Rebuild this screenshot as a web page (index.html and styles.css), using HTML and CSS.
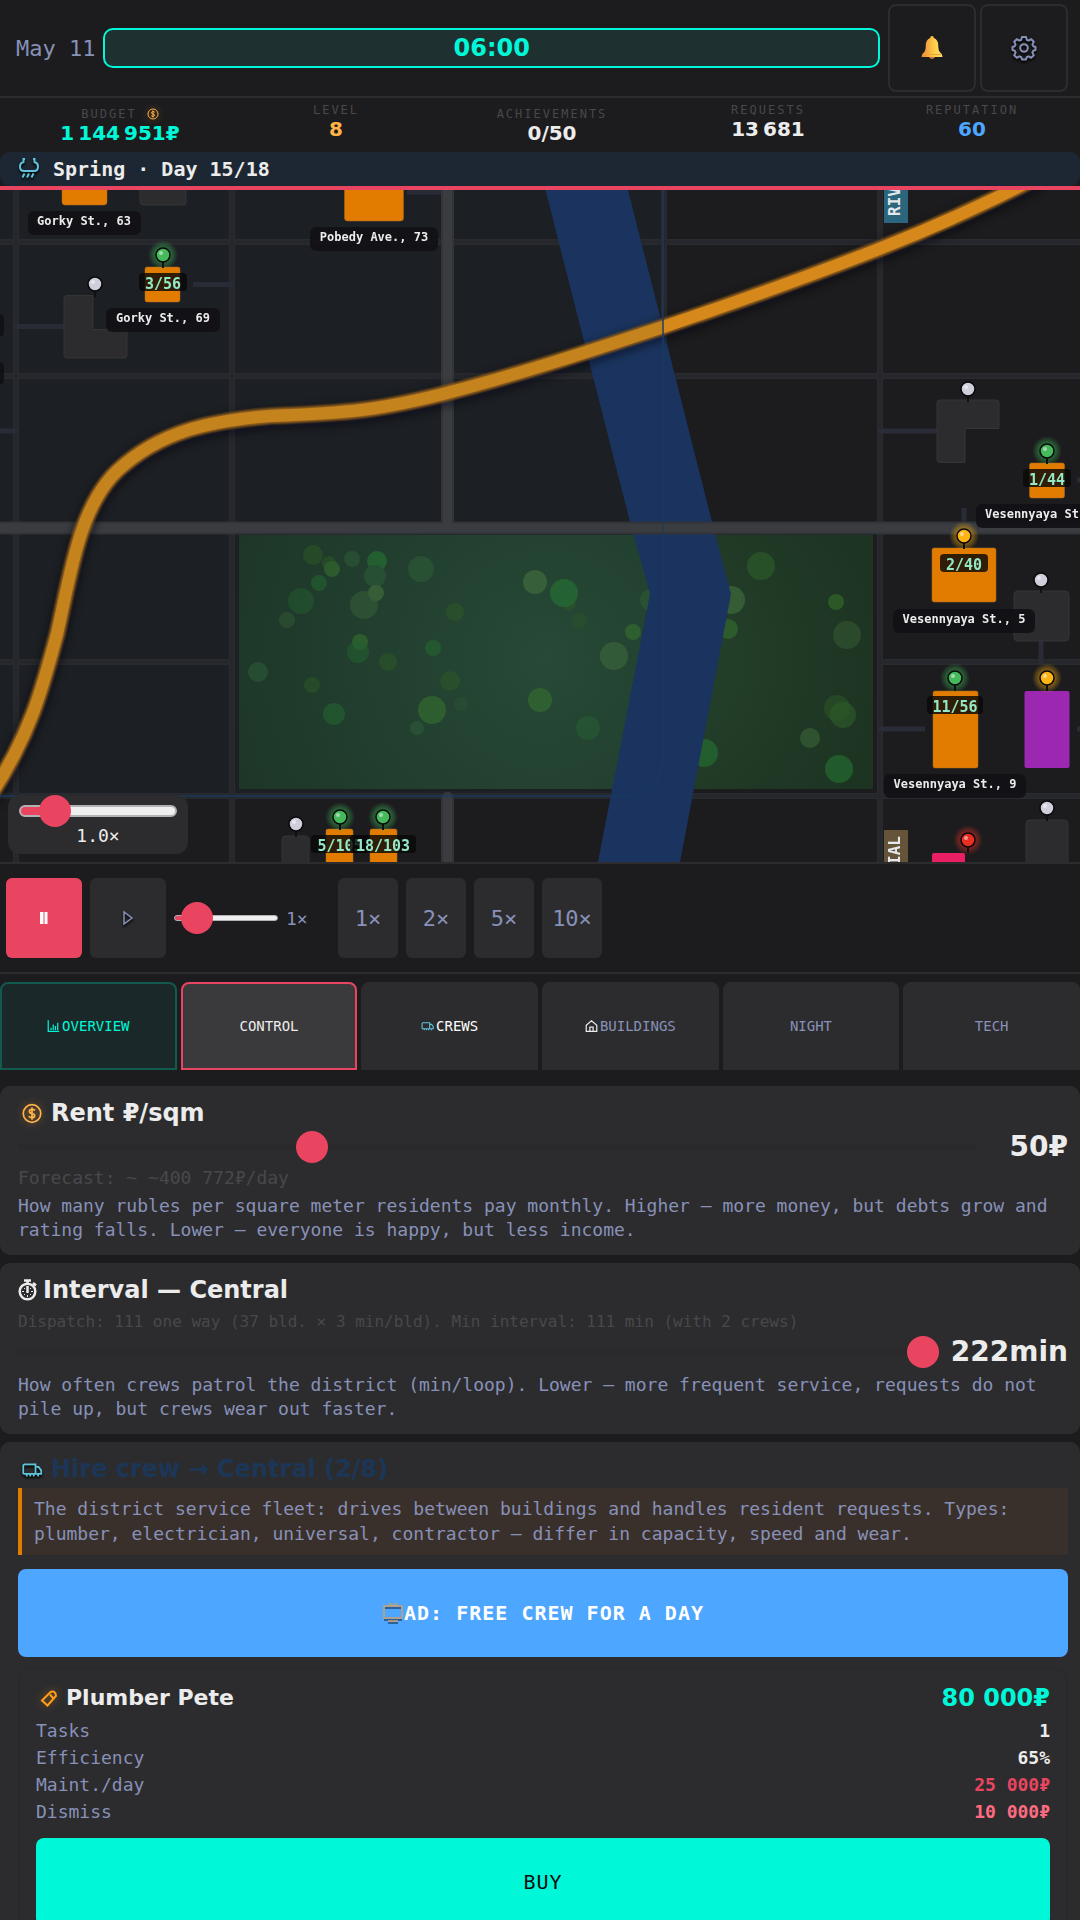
FILE: index.html
```html
<!DOCTYPE html>
<html lang="en">
<head>
<meta charset="utf-8">
<meta name="viewport" content="width=device-width, initial-scale=1">
<title>District manager</title>
<link rel="stylesheet" href="styles.css">
</head>
<body>
<svg class="defs" aria-hidden="true">
  <symbol id="i-coin" viewBox="0 0 24 24"><g fill="none" stroke="currentColor" stroke-width="2"><circle cx="12" cy="12" r="10"/><path d="M15.500 8.500Q14 7 12 7.200Q8.800 7.500 9 9.600Q9.200 11.600 12 12Q15 12.500 15 14.500Q15 16.700 12 16.800Q9.500 16.800 8.300 15.200M12 5v14"/></g></symbol>
  <symbol id="i-truck" viewBox="0 0 24 24"><g fill="none" stroke="currentColor" stroke-width="2"><path d="M2 17V8Q2 6 4 6H16v11M16 9h3.500l3 4v4H2M6 17.500v2.500M10 17.500v2.500M14 17.500v2.500M19 17.500v2.500"/></g></symbol>
  <symbol id="i-chart" viewBox="0 0 16 16"><path d="M1.500 1v13.500H15M5 13v-3M7.700 13V6M10.400 13V8M13.200 13V4" fill="none" stroke="currentColor" stroke-width="1.500"/></symbol>
  <symbol id="i-home" viewBox="0 0 16 16"><path d="M1.500 14.500V7L8 1.500 14.500 7v7.500zM6 14v-4.500h4V14" fill="none" stroke="currentColor" stroke-width="1.500"/></symbol>
</svg>

<div class="app">
  <header class="topbar">
    <span class="date">May 11</span>
    <div class="clock">06:00</div>
    <div class="topbar-actions">
      <button class="icon-btn" type="button" aria-label="Notifications">
        <svg width="24" height="24" viewBox="0 0 24 24"><defs><linearGradient id="bell" x1="0" x2="1"><stop offset="0" stop-color="#e8833a"/><stop offset=".6" stop-color="#ffce47"/><stop offset="1" stop-color="#ffe06a"/></linearGradient></defs><path d="M12 0q1.800 0 1.800 2Q18 3.500 18.200 9q.2 6 1.800 7.300 2.500 1.400 2.500 4.700H1.500q0-3.300 2.500-4.700Q5.600 15 5.800 9 6 3.500 10.200 2q0-2 1.800-2z" fill="url(#bell)"/><path d="M3 18.500h18" stroke="#f2a23a" stroke-width="1"/><path d="M9 21h6q-1 2-3 2t-3-2z" fill="#c9703a"/></svg>
      </button>
      <button class="icon-btn" type="button" aria-label="Settings">
        <svg class="shadowed" width="26" height="26" viewBox="0 0 26 26" fill="none" stroke="#8891b8" stroke-width="2" stroke-linejoin="round"><path d="M11 2h4l.8 2.800 1.800.8L20.200 4.200l2.600 2.600-1.400 2.600.8 1.800 2.300.8v3l-2.300.8-.8 1.800 1.400 2.600-2.600 2.600-2.600-1.400-1.800.8L15 24.500h-4l-.8-2.300-1.800-.8-2.600 1.400-2.600-2.600 1.400-2.600-.8-1.800-2.300-.8v-3l2.300-.8.8-1.800-1.400-2.600 2.600-2.600 2.600 1.400 1.800-.8z"/><circle cx="13" cy="13" r="3.800"/></svg>
      </button>
    </div>
  </header>

  <section class="stats" aria-label="City statistics">
    <div class="stat stat-low"><span class="stat-label">BUDGET <svg class="glow stat-icon"><use href="#i-coin"/></svg></span><span class="stat-value c-mint">1&#8239;144&#8239;951₽</span></div>
    <div class="stat"><span class="stat-label">LEVEL</span><span class="stat-value c-amber">8</span></div>
    <div class="stat stat-low"><span class="stat-label">ACHIEVEMENTS</span><span class="stat-value">0/50</span></div>
    <div class="stat"><span class="stat-label">REQUESTS</span><span class="stat-value">13&#8239;681</span></div>
    <div class="stat"><span class="stat-label">REPUTATION</span><span class="stat-value c-blue">60</span></div>
  </section>

  <div class="season">
    <svg class="shadowed" width="22" height="22" viewBox="0 0 22 22" fill="none" stroke="#5fc4dc" stroke-width="2"><path d="M7 1H5.500V4Q2 5 2 8.500 2 13 6 13h10q4 0 4-4.500 0-3.500-3.500-4.500V1H15M6.500 15.500l-2 4M11 15.500l-2 4M15.500 15.500l-2 4"/></svg>
    <span>Spring · Day 15/18</span>
  </div>

  <section class="map" aria-label="City map">
    <svg class="map-canvas" viewBox="0 190 1080 672">
      <defs>
        <radialGradient id="park" gradientUnits="userSpaceOnUse" cx="545" cy="660" r="330"><stop offset="0" stop-color="#274936"/><stop offset="1" stop-color="#1d3628"/></radialGradient>
        <radialGradient id="parkEast" gradientUnits="userSpaceOnUse" cx="640" cy="660" r="240"><stop offset="0" stop-color="#25432d"/><stop offset="1" stop-color="#1d3422"/></radialGradient>
        <radialGradient id="glowGreen"><stop offset=".35" stop-color="#3fbf5a" stop-opacity=".6"/><stop offset="1" stop-color="#3fbf5a" stop-opacity="0"/></radialGradient>
        <radialGradient id="glowYellow"><stop offset=".35" stop-color="#ffb30f" stop-opacity=".6"/><stop offset="1" stop-color="#ffb30f" stop-opacity="0"/></radialGradient>
        <radialGradient id="glowRed"><stop offset=".35" stop-color="#ef3124" stop-opacity=".6"/><stop offset="1" stop-color="#ef3124" stop-opacity="0"/></radialGradient>
        <linearGradient id="highway" gradientUnits="userSpaceOnUse" x1="663" x2="664" y1="0" y2="0"><stop offset="0" stop-color="#c5831e"/><stop offset="1" stop-color="#d6891a"/></linearGradient>
        <filter id="soft" x="-5%" y="-5%" width="110%" height="110%"><feGaussianBlur stdDeviation="4"/></filter>
        <filter id="edge" x="-5%" y="-5%" width="110%" height="110%"><feGaussianBlur stdDeviation="1"/></filter>
        <g id="pin"><path d="M0 7v6" stroke="#111" stroke-width="2"/><circle r="7" stroke="#08080a" stroke-width="1.500"/><circle cx="-2" cy="-2" r="2" fill="#fff" opacity=".5"/></g>
      </defs>
      <rect y="190" width="1080" height="672" fill="#1c1c1e"/>
      <path d="M0 190H663V756Q663 796 623 796H0z" fill="#1c1f24"/>

      <g class="road-edge"><path d="M16 190V862M232 190V862M664 190V521M880 190V862M0 242H1080M0 376H1080M0 662H231M880 662H1080M0 796H1080"/></g>
      <g class="road-core"><path d="M16 190V862M232 190V862M664 190V521M880 190V862M0 242H1080M0 376H1080M0 662H231M880 662H1080M0 796H1080"/></g>

      <path d="M239 535H664V789H239z" fill="url(#park)"/>
      <path d="M664 535H873V789H664z" fill="url(#parkEast)"/>
      <g opacity=".5">
        <g fill="#2f5a26"><circle cx="313" cy="555" r="10"/><circle cx="329" cy="563" r="7"/><circle cx="455" cy="612" r="9"/><circle cx="388" cy="662" r="9"/><circle cx="312" cy="685" r="8"/><circle cx="450" cy="681" r="10"/><circle cx="579" cy="621" r="8" opacity=".6"/><circle cx="569" cy="603" r="7"/><circle cx="837" cy="708" r="13"/></g>
        <g fill="#3a7a2e"><circle cx="332" cy="569" r="8"/><circle cx="360" cy="642" r="8"/><circle cx="432" cy="710" r="14"/><circle cx="540" cy="700" r="12"/><circle cx="633" cy="632" r="8"/><circle cx="728" cy="629" r="10"/><circle cx="761" cy="566" r="14" opacity=".7"/><circle cx="836" cy="602" r="8"/><circle cx="843" cy="715" r="13" opacity=".7"/></g>
        <g fill="#278034"><circle cx="377" cy="561" r="10"/><circle cx="319" cy="583" r="8" opacity=".7"/><circle cx="301" cy="601" r="13" opacity=".5"/><circle cx="358" cy="652" r="11" opacity=".6"/><circle cx="334" cy="714" r="11" opacity=".7"/><circle cx="433" cy="648" r="8" opacity=".7"/><circle cx="564" cy="593" r="14"/><circle cx="588" cy="728" r="12" opacity=".5"/><circle cx="704" cy="753" r="14"/><circle cx="839" cy="769" r="14"/></g>
        <g fill="#2f6138"><circle cx="352" cy="559" r="8"/><circle cx="375" cy="576" r="11"/><circle cx="421" cy="569" r="13"/><circle cx="258" cy="672" r="10"/><circle cx="461" cy="704" r="7" opacity=".5"/><circle cx="417" cy="728" r="7"/><circle cx="651" cy="600" r="11"/></g>
        <g fill="#4a7c42"><circle cx="364" cy="605" r="14" opacity=".6"/><circle cx="376" cy="593" r="8"/><circle cx="287" cy="620" r="8" opacity=".5"/><circle cx="535" cy="582" r="12"/><circle cx="614" cy="656" r="14" opacity=".8"/><circle cx="731" cy="600" r="14"/><circle cx="847" cy="635" r="14" opacity=".6"/><circle cx="810" cy="738" r="10" opacity=".8"/></g>
      </g>
      <path d="M545.500 190H628L712 522 731 594 680 862H598L650 594 630 522z" fill="#1a345f"/>

      <g fill="none" stroke="#313439" stroke-width="13"><path d="M447.500 190V528M0 528H1080"/><path d="M447.500 798V862" stroke-linecap="round"/></g>
      <g fill="none" stroke="#3a3c40" stroke-width="9"><path d="M447.500 190V528M0 528H1080"/><path d="M447.500 798V862" stroke-linecap="round"/></g>

      <path class="highway" d="M-10 796C30 735 42 690 57 634 71 572 79 508 117 471 160 431 210 421 270 416 350 413 380 410 447 393 520 374 590 351 663 327 740 301 810 276 879 249 940 225 990 202 1040 176" transform="translate(0 3)" stroke="#0b0c10" stroke-opacity=".5" stroke-width="20" filter="url(#soft)"/>
      <path class="highway" d="M-10 796C30 735 42 690 57 634 71 572 79 508 117 471 160 431 210 421 270 416 350 413 380 410 447 393 520 374 590 351 663 327 740 301 810 276 879 249 940 225 990 202 1040 176" stroke="#94611a" stroke-width="16" filter="url(#edge)"/>
      <path class="highway" d="M-10 796C30 735 42 690 57 634 71 572 79 508 117 471 160 431 210 421 270 416 350 413 380 410 447 393 520 374 590 351 663 327 740 301 810 276 879 249 940 225 990 202 1040 176" stroke="url(#highway)" stroke-width="12"/>
      <path d="M663 190V756Q663 796 623 796H0" fill="none" stroke="#1b3a5e" stroke-opacity=".7" stroke-width="2"/>

      <path d="M407 192H441M193 284.500H233M15 326.500H64M0 431H17M878 431H937M964 508V521M1041 641V664M878 729H925M1077 480H1080M1077 729H1080" stroke="#292c36" stroke-width="5" fill="none"/>

      <g fill="#2c2c2e" stroke="#353537">
        <rect x="140" y="170" width="46" height="35" rx="3"/>
        <path d="M67 295.500H93V329.500H127V355Q127 358 124 358H67Q64 358 64 355V298Q64 295.500 67 295.500z"/>
        <path d="M940 400H996Q999 400 999 403V428.500H965V462.500H940Q937 462.500 937 460V403Q937 400 940 400z"/>
        <rect x="1014" y="591" width="55" height="50" rx="4"/><rect x="1026" y="820" width="42" height="50" rx="4"/><rect x="282" y="836" width="27" height="40" rx="4"/>
      </g>
      <g fill="#e17c00" stroke="#a86a20" stroke-width=".5">
        <rect x="62" y="170" width="45" height="35" rx="3"/><rect x="344.500" y="170" width="59" height="51" rx="3"/><rect x="145" y="267" width="35" height="35" rx="2"/><rect x="1029.500" y="463" width="35" height="35" rx="2"/><rect x="932" y="548" width="64" height="54" rx="2"/><rect x="933" y="691" width="45" height="77" rx="2"/><rect x="326" y="829" width="27" height="40" rx="2"/><rect x="370" y="829" width="27" height="40" rx="2"/>
      </g>
      <rect x="1024.500" y="691" width="45" height="77" rx="2" fill="#9c27b0"/><rect x="932" y="853" width="33" height="20" rx="2" fill="#e91e63"/>

      <g class="map-tag"><rect x="884" y="180" width="24" height="43" fill="#2b667c"/><text transform="translate(900 216) rotate(-90)">RIV</text><rect x="884" y="830" width="24" height="40" fill="#66543a"/><text transform="translate(900 836) rotate(-90)" text-anchor="end">IAL</text></g>

      <g fill="url(#glowGreen)"><circle cx="163" cy="255" r="15"/><circle cx="1047" cy="451" r="15"/><circle cx="955" cy="678" r="15"/><circle cx="340" cy="817" r="15"/><circle cx="383" cy="817" r="15"/></g>
      <g fill="url(#glowYellow)"><circle cx="964" cy="536" r="15"/><circle cx="1047" cy="678" r="15"/></g>
      <circle cx="968" cy="840" r="15" fill="url(#glowRed)"/>
      <g fill="#45b95c"><use href="#pin" x="163" y="255"/><use href="#pin" x="1047" y="451"/><use href="#pin" x="955" y="678"/><use href="#pin" x="340" y="817"/><use href="#pin" x="383" y="817"/></g>
      <g fill="#fdb414"><use href="#pin" x="964" y="536"/><use href="#pin" x="1047" y="678"/></g>
      <g fill="#e82e22"><use href="#pin" x="968" y="840"/></g>
      <g fill="#cfcfdb"><use href="#pin" x="95" y="284"/><use href="#pin" x="968" y="389"/><use href="#pin" x="1041" y="580"/><use href="#pin" x="1047" y="808"/><use href="#pin" x="296" y="824"/></g>

      <g class="map-label">
        <rect x="28" y="211" width="113" height="24" rx="6"/><text x="84" y="225">Gorky St., 63</text>
        <rect x="310" y="227" width="128" height="24" rx="6"/><text x="374" y="241">Pobedy Ave., 73</text>
        <rect x="106" y="308" width="114" height="24" rx="6"/><text x="163" y="322">Gorky St., 69</text>
        <rect x="976" y="504" width="142" height="24" rx="6"/><text class="start" x="985" y="518">Vesennyaya St.</text>
        <rect x="893" y="609" width="142" height="24" rx="6"/><text x="964" y="623">Vesennyaya St., 5</text>
        <rect x="884" y="774" width="142" height="24" rx="6"/><text x="955" y="788">Vesennyaya St., 9</text>
        <rect x="-20" y="314" width="24" height="23" rx="5"/><rect x="-20" y="362" width="24" height="23" rx="5"/>
      </g>
      <g class="map-count">
        <rect x="139" y="273" width="48" height="18" rx="4"/><text x="163" y="289">3/56</text>
        <rect x="1023" y="469" width="48" height="18" rx="4"/><text x="1047" y="485">1/44</text>
        <rect x="940" y="554" width="48" height="18" rx="4"/><text x="964" y="570">2/40</text>
        <rect x="927" y="696" width="56" height="18" rx="4"/><text x="955" y="712">11/56</text>
        <rect x="311" y="835" width="57" height="18" rx="4"/><text x="340" y="851">5/105</text>
        <rect x="350" y="835" width="66" height="18" rx="4"/><text x="383" y="851">18/103</text>
      </g>
    </svg>
    <div class="zoom-panel">
      <input class="range range-thick" type="range" id="zoom" min="0" max="100" value="15" style="--fill:22%" aria-label="Map zoom">
      <output for="zoom">1.0×</output>
    </div>
  </section>

  <section class="controls" aria-label="Time controls">
    <button class="play-btn is-on" type="button" aria-label="Pause"><svg width="10" height="12" viewBox="0 0 10 12"><path d="M1 0h3.500v12H1zM5.500 0h3v12h-3z" fill="#fff"/></svg></button>
    <button class="play-btn" type="button" aria-label="Play"><svg class="shadowed" width="14" height="18" viewBox="0 0 14 18"><path d="M3 3v12l8-6z" fill="none" stroke="#8891b8" stroke-width="1.500"/></svg></button>
    <input class="range speed-range" type="range" id="speed" min="0" max="100" value="8" style="--fill:20%" aria-label="Speed">
    <output class="speed-value" for="speed">1×</output>
    <div class="speed-group">
      <button class="speed-btn" type="button">1×</button>
      <button class="speed-btn" type="button">2×</button>
      <button class="speed-btn" type="button">5×</button>
      <button class="speed-btn" type="button">10×</button>
    </div>
  </section>

  <nav class="tabs">
    <button class="tab tab-overview" type="button"><svg class="tab-icon"><use href="#i-chart"/></svg>OVERVIEW</button>
    <button class="tab tab-active" type="button">CONTROL</button>
    <button class="tab tab-bright" type="button"><svg class="tab-icon c-sky"><use href="#i-truck"/></svg>CREWS</button>
    <button class="tab" type="button"><svg class="tab-icon c-white"><use href="#i-home"/></svg>BUILDINGS</button>
    <button class="tab" type="button">NIGHT</button>
    <button class="tab" type="button">TECH</button>
  </nav>

  <main class="panel">
    <section class="card">
      <h2 class="card-title"><svg class="title-icon glow"><use href="#i-coin"/></svg><label for="rent">Rent ₽/sqm</label></h2>
      <div class="slider-row">
        <input class="range range-dim" type="range" id="rent" min="20" max="120" value="50">
        <output class="slider-value" for="rent">50₽</output>
      </div>
      <p class="forecast">Forecast: ~ ~400 772₽/day</p>
      <p class="description">How many rubles per square meter residents pay monthly. Higher — more money, but debts grow and rating falls. Lower — everyone is happy, but less income.</p>
    </section>

    <section class="card">
      <h2 class="card-title title-spaced"><svg width="20" height="22" viewBox="0 0 20 22" fill="none" stroke="#ececec"><circle cx="9.500" cy="12.500" r="7.800" stroke-width="2.500"/><path d="M6 1.500h7M9.500 1v4M15 4l3 2.500" stroke-width="2.500"/><path d="M9.500 7v7" stroke-width="2.500"/><path d="M4 12.500h2M13 12.500h2M9.500 16v2M6 9l1 1M13 9l-1 1M6 16l1-1M13 16l-1-1" stroke-width="1"/></svg><label for="interval">Interval — Central</label></h2>
      <p class="hint">Dispatch: 111 one way (37 bld. × 3 min/bld). Min interval: 111 min (with 2 crews)</p>
      <div class="slider-row">
        <input class="range range-dim" type="range" id="interval" min="111" max="222" value="222">
        <output class="slider-value" for="interval">222min</output>
      </div>
      <p class="description">How often crews patrol the district (min/loop). Lower — more frequent service, requests do not pile up, but crews wear out faster.</p>
    </section>

    <section class="card">
      <h2 class="card-title title-navy title-spaced"><svg class="title-icon c-sky shadowed"><use href="#i-truck"/></svg>Hire crew → Central (2/8)</h2>
      <p class="note">The district service fleet: drives between buildings and handles resident requests. Types: plumber, electrician, universal, contractor — differ in capacity, speed and wear.</p>
      <button class="big-btn ad-btn" type="button"><svg width="22" height="22" viewBox="0 0 22 22" fill="none" stroke-width="1.500"><path d="M3 6h16M6 21h10M2 18h18" stroke="#234b78"/><path d="M7 1l4 3 4-3M2 4h18v12H2zM6 19h10" stroke="#c9a070"/></svg>AD: FREE CREW FOR A DAY</button>
      <article class="offer">
        <header class="offer-head">
          <h3><svg class="glow-orange" width="26" height="26" viewBox="0 0 26 26" fill="none" stroke="#ff9f1a" stroke-width="2"><path d="M6 15.500L14.500 7Q19.500 5 20 11L11.500 20.500zM14 9.500l3 3.500"/></svg>Plumber Pete</h3>
          <span class="offer-price">80&nbsp;000₽</span>
        </header>
        <table class="specs">
          <tbody>
            <tr><th scope="row">Tasks</th><td>1</td></tr>
            <tr><th scope="row">Efficiency</th><td>65%</td></tr>
            <tr><th scope="row">Maint./day</th><td class="c-red">25 000₽</td></tr>
            <tr><th scope="row">Dismiss</th><td class="c-pink">10 000₽</td></tr>
          </tbody>
        </table>
        <button class="big-btn buy-btn" type="button">BUY</button>
      </article>
    </section>
  </main>
</div>
</body>
</html>
```
FILE: styles.css
```css
:root {
  --bg: #1c1c1e;
  --surface: #2c2c2e;
  --text: #ececec;
  --muted: #8891b8;
  --faint: #48484a;
  --mint: #00f8d8;
  --red: #e94560;
  --mono: "DejaVu Sans Mono", "Liberation Mono", monospace;
  --display: "DejaVu Sans", "Open Sans", sans-serif;
}

* { box-sizing: border-box; }

body {
  margin: 0;
  background: var(--bg);
  color: var(--text);
  font-family: var(--mono);
}

h2, h3, p { margin: 0; }
svg { flex: none; }
button { padding: 0; border: 0; font-family: inherit; color: inherit; cursor: pointer; }

.defs { position: absolute; width: 0; height: 0; }
.app { display: flex; flex-direction: column; height: 100vh; overflow: hidden; }
.app > * { flex: none; }

.c-mint { color: var(--mint); }
.c-amber { color: #ffb347; }
.c-blue { color: #4da6ff; }
.c-sky { color: #5fc4dc; }
.c-white { color: #ececec; }
.c-red { color: #e94560; }
.c-pink { color: #ff6b81; }
.shadowed { filter: drop-shadow(0 2px 1px #000); }
.glow { color: #ffb347; filter: drop-shadow(0 0 4px rgba(255, 160, 40, .45)); }
.glow-orange { filter: drop-shadow(0 0 4px rgba(255, 140, 20, .45)); }

.topbar {
  display: flex;
  align-items: center;
  gap: 8px;
  padding: 4px 12px 4px 16px;
  border-bottom: 2px solid var(--surface);
}
.date { font-size: 22px; color: var(--muted); }
.clock {
  flex: 1;
  border: 2px solid var(--mint);
  border-radius: 10px;
  background: #1f3030;
  color: var(--mint);
  font: bold 24px/36px var(--display);
  text-align: center;
}
.topbar-actions { display: flex; gap: 4px; }
.icon-btn {
  display: grid;
  place-items: center;
  width: 88px;
  height: 88px;
  border: 2px solid var(--surface);
  border-radius: 8px;
  background: transparent;
}

.stats { display: grid; grid-template-columns: 20fr 16fr 20fr 16fr 18fr; height: 54px; }
.stat { display: flex; flex-direction: column; align-items: center; padding-top: 5px; }
.stat-low { padding-top: 9px; }
.stat-label {
  display: flex;
  align-items: center;
  gap: 10px;
  font-size: 12px;
  line-height: 14px;
  letter-spacing: 2px;
  color: var(--faint);
}
.stat-icon { width: 12px; height: 12px; }
.stat-value { font: bold 20px/24px var(--display); }

.season {
  display: flex;
  align-items: center;
  gap: 13px;
  padding: 0 18px;
  border-radius: 10px;
  background: #1c2733;
  font-size: 20px;
  font-weight: bold;
  line-height: 34px;
}

.map { position: relative; border-top: 4px solid var(--red); }
.map-canvas { display: block; width: 100%; height: auto; }
.road-edge { fill: none; stroke: #292b30; stroke-width: 6; }
.road-core { fill: none; stroke: #25272b; stroke-width: 3; }
.highway { fill: none; }
.map-label rect { fill: #121216; fill-opacity: .95; }
.map-label text { fill: #ececec; font: bold 12px var(--mono); text-anchor: middle; }
.map-label .start { text-anchor: start; }
.map-count rect { fill: #08080a; fill-opacity: .82; }
.map-count text { fill: #94e8c6; font: bold 15px var(--mono); text-anchor: middle; }
.map-tag text { fill: #e4e8ec; font: bold 16px var(--mono); }

.zoom-panel {
  position: absolute;
  left: 8px;
  bottom: 8px;
  display: flex;
  flex-direction: column;
  align-items: center;
  width: 180px;
  padding: 0 11px 9px;
  border-radius: 12px;
  background: var(--surface);
  font-size: 18px;
  line-height: 18px;
}

.range {
  -webkit-appearance: none;
  appearance: none;
  width: 100%;
  height: 32px;
  margin: 0;
  background: transparent;
}
.range::-webkit-slider-runnable-track {
  height: 6px;
  border: 1px solid #b2b2b2;
  border-radius: 6px;
  background: linear-gradient(to right, var(--red) var(--fill), #efefef var(--fill));
}
.range::-webkit-slider-thumb {
  -webkit-appearance: none;
  width: 32px;
  height: 32px;
  margin-top: -14px;
  border-radius: 50%;
  background: var(--red);
}
.range-thick::-webkit-slider-runnable-track { height: 12px; border-width: 2px; }
.range-thick::-webkit-slider-thumb { margin-top: -12px; }
.range-dim::-webkit-slider-runnable-track { border: 0; background: #2a2a2c; }
.range-dim::-webkit-slider-thumb { margin-top: -13px; }

.controls {
  display: flex;
  align-items: center;
  gap: 8px;
  padding: 14px 6px;
  border-top: 2px solid var(--surface);
  border-bottom: 2px solid var(--surface);
}
.play-btn {
  display: grid;
  place-items: center;
  width: 76px;
  height: 80px;
  border-radius: 6px;
  background: var(--surface);
}
.is-on { background: var(--red); }
.speed-range { width: 104px; }
.speed-value { width: 44px; font-size: 18px; color: var(--muted); }
.speed-group { display: flex; gap: 8px; }
.speed-btn {
  width: 60px;
  height: 80px;
  border-radius: 6px;
  background: var(--surface);
  color: var(--muted);
  font-size: 22px;
}

.tabs { display: grid; grid-template-columns: repeat(6, 1fr); gap: 4px; padding-top: 8px; }
.tab {
  display: flex;
  align-items: center;
  justify-content: center;
  gap: 2px;
  height: 88px;
  border: 2px solid var(--surface);
  border-radius: 8px 8px 0 0;
  background: var(--surface);
  color: var(--muted);
  font-size: 14px;
}
.tab-icon { width: 13px; height: 14px; }
.tab-overview { border-color: #12594f; background: #1b2829; color: var(--mint); }
.tab-active { border-color: var(--red); background: #3a3a3c; color: var(--text); }
.tab-bright { color: #fff; }

.panel { display: flex; flex-direction: column; gap: 8px; padding-top: 16px; }
.card { padding: 12px 12px 13px 18px; border-radius: 10px; background: var(--surface); }
.card-title {
  display: flex;
  align-items: center;
  gap: 5px;
  font: bold 24px/30px var(--display);
}
.title-icon { width: 28px; height: 21px; }
.title-spaced { margin-bottom: 4px; }
.title-navy { color: #1c3658; }
.slider-row { display: flex; align-items: center; gap: 12px; height: 38px; }
.slider-row .range { flex: 1; }
.slider-value { min-width: 80px; font: bold 28px/38px var(--display); text-align: right; }
.forecast { font-size: 18px; line-height: 24px; color: var(--faint); }
.hint { padding-top: 2px; font-size: 16px; line-height: 22px; color: var(--faint); }
.description { margin-top: 4px; font-size: 18px; line-height: 24px; color: var(--muted); }
.hint ~ .description { margin-top: 2px; }
.note {
  padding: 8px 12px 9px;
  border-left: 4px solid #e17c00;
  background: #3a302b;
  color: var(--muted);
  font-size: 18px;
  line-height: 25px;
}
.big-btn {
  display: flex;
  align-items: center;
  justify-content: center;
  width: 100%;
  height: 88px;
  border-radius: 8px;
  font-size: 20px;
  letter-spacing: 1px;
}
.ad-btn { margin-top: 14px; background: #4da6ff; color: #fff; font-weight: bold; }
.buy-btn { margin-top: 13px; background: var(--mint); color: #0c0c0e; }

.offer {
  margin-top: 10px;
  padding: 14px 16px;
  border: 2px solid #2a2a2c;
  border-radius: 12px;
}
.offer-head { display: flex; align-items: center; justify-content: space-between; margin-bottom: 4px; }
.offer h3 { display: flex; align-items: center; gap: 4px; font: bold 22px/30px var(--display); }
.offer-price { color: var(--mint); font: bold 24px/30px var(--display); }
.specs { width: 100%; border-collapse: collapse; font-size: 18px; line-height: 27px; }
.specs th { padding: 0; color: var(--muted); font-weight: normal; text-align: left; }
.specs td { padding: 0; font-weight: bold; text-align: right; }
```
